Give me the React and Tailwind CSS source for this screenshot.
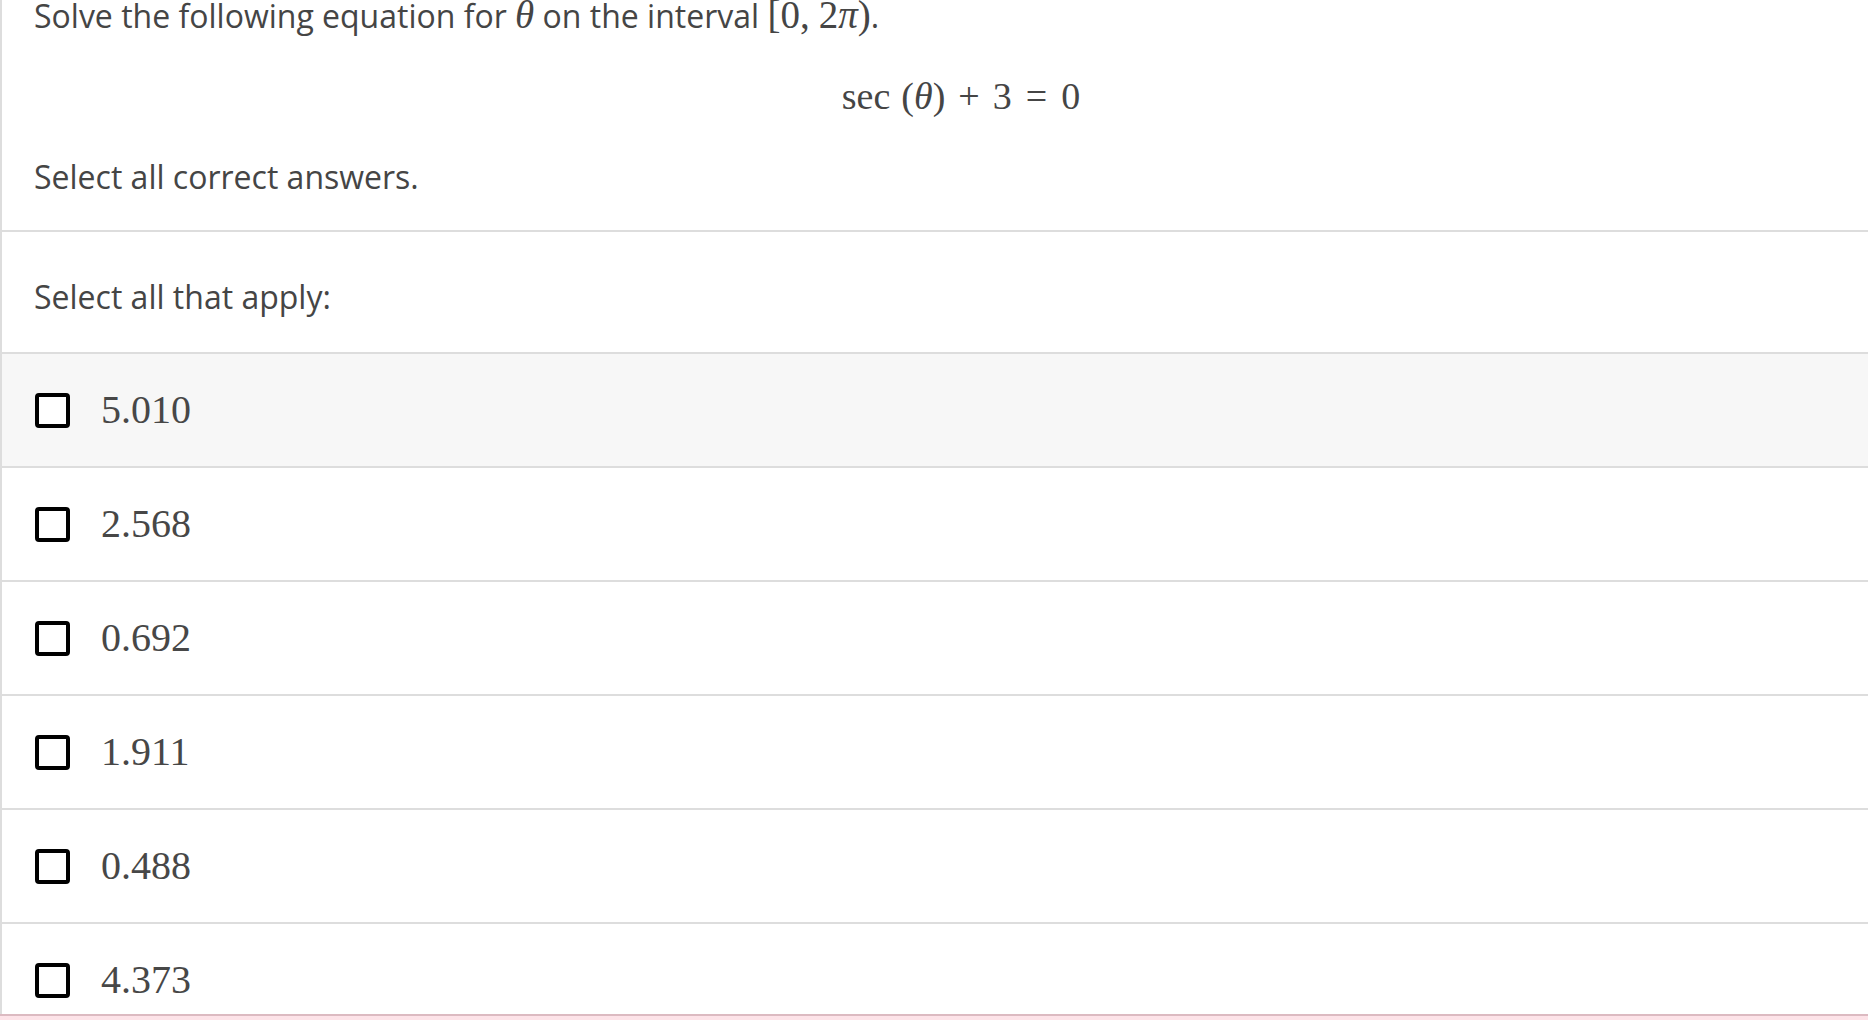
import React from 'react';

const options = ['5.010', '2.568', '0.692', '1.911', '0.488', '4.373'];

function Checkbox() {
  return <span className="block w-[35px] h-[35px] shrink-0 rounded-[4px] border-[4px] border-black bg-white" />;
}

function Serif({ children, className = '' }) {
  return <span className={`font-['Liberation_Serif','Times_New_Roman',serif] ${className}`}>{children}</span>;
}

export default function App() {
  return <div className="relative w-[1868px] h-[1020px] overflow-hidden bg-white text-[#454545] font-['Open_Sans',sans-serif]">
      <div className="w-[1920px] border-l-2 border-[#dddddd]">
        {/* Question */}
        <div className="pl-[32px] pb-[38px] border-b-2 border-[#dddddd]">
          <p className="text-[32px] leading-[30px] whitespace-nowrap">
            Solve the following equation for <Serif className="italic text-[39px]">θ</Serif> on the interval{' '}
            <Serif className="text-[39px]">[0,<span className="ml-[9px]">2</span><span className="italic">π</span>)</Serif>.
          </p>
          <div className="mt-[44px] flex justify-center text-[38px] leading-[42px] pr-[32px]">
            <Serif className="whitespace-nowrap">
              sec<span className="ml-[11px]">(</span><span className="italic">θ</span>)
              <span className="mx-[13px]">+</span>3<span className="mx-[14px]">=</span>0
            </Serif>
          </div>
          <p className="mt-[45px] text-[32px] leading-[30px]">Select all correct answers.</p>
        </div>

        <div className="pl-[32px] pt-[50px] pb-[40px] border-b-2 border-[#dddddd]">
          <p className="text-[32px] leading-[30px]">Select all that apply:</p>
        </div>

        {/* Options */}
        {options.map((o, i) => <label key={o} className={`flex items-center h-[114px] pl-[33px] gap-[31px] border-b-2 border-[#dddddd] ${i === 0 ? 'bg-[#f7f7f7]' : 'bg-white'}`}>
            <Checkbox />
            <Serif className="text-[40px] leading-[44px] text-[#474747]">{o}</Serif>
          </label>)}
      </div>

      {/* bottom bar overlay */}
      <div className="absolute left-0 right-0 bottom-0 h-[6px] border-t-2 border-[#dcbac1] bg-[#fde3e8]" />
    </div>;
}
